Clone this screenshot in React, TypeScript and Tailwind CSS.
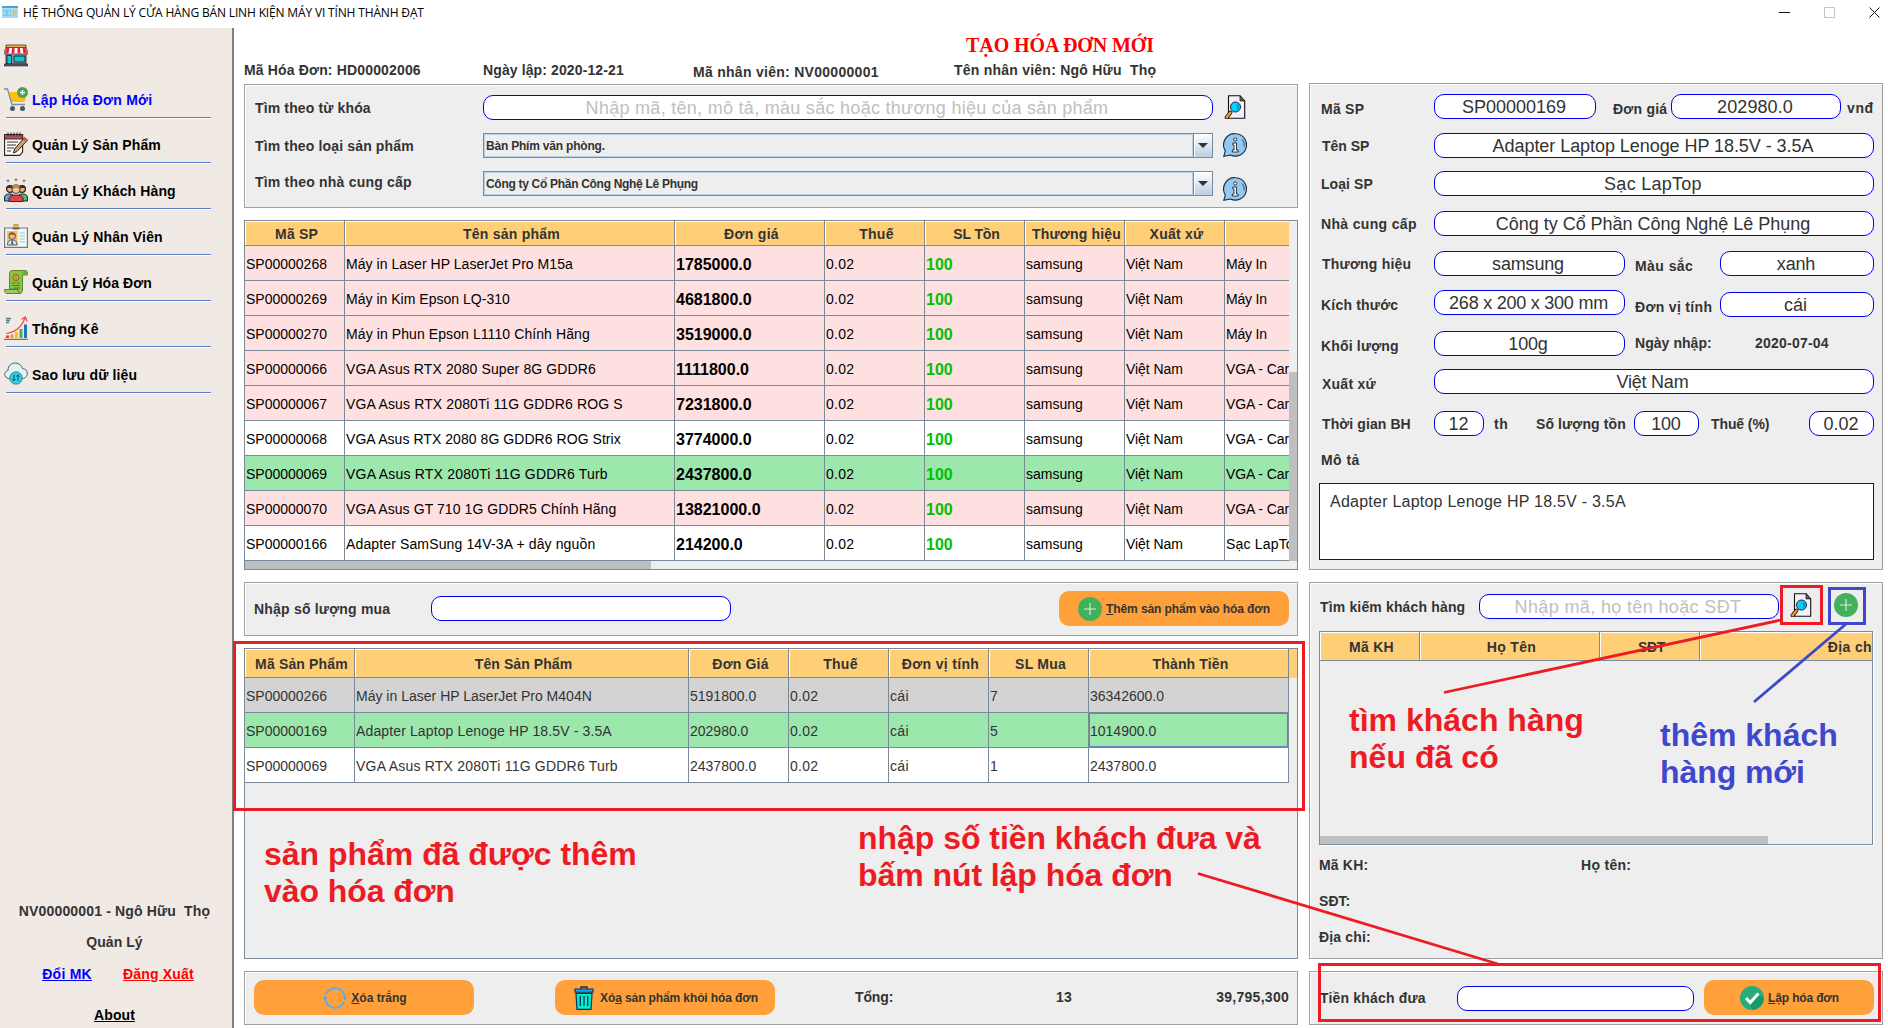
import { useLayoutEffect, useRef, type ReactNode } from "react";

/** Inline caption whose tracking is adjusted so that it spans `w` pixels. */
function Fit({ w, className = "", children }: { w?: number; className?: string; children: ReactNode }) {
  const ref = useRef<HTMLSpanElement>(null);
  useLayoutEffect(() => {
    const el = ref.current;
    if (!el || !w) return;
    el.style.letterSpacing = "0px";
    const natural = el.getBoundingClientRect().width;
    const count = (el.textContent ?? "").length;
    el.style.letterSpacing = `${(w + 0.8 - natural) / Math.max(count, 1)}px`;
  }, [w]);
  return (
    <span ref={ref} className={`inline-block whitespace-pre ${className}`}>
      {children}
    </span>
  );
}

function Label({ w, className = "", children }: { w?: number; className?: string; children: ReactNode }) {
  return (
    <div className={`shrink-0 text-[14px] leading-4 font-bold text-[#333] ${className}`}>
      <Fit w={w}>{children}</Fit>
    </div>
  );
}

function Field({ w, className = "pr-[2px]", muted = false, children }: { w?: number; className?: string; muted?: boolean; children?: ReactNode }) {
  return (
    <div
      className={`h-[25px] shrink-0 overflow-hidden rounded-[10px] border border-[#0000ee] bg-white text-center text-[18px] leading-[25px] ${
        muted ? "text-[#c0c0c0]" : "text-[#333]"
      } ${className}`}
    >
      {children !== undefined && <Fit w={w}>{children}</Fit>}
    </div>
  );
}

function Panel({ className = "", children }: { className?: string; children?: ReactNode }) {
  return (
    <section className={`border border-[#a0a0a0] bg-[#eee] shadow-[inset_1px_1px_0_#fff] ${className}`}>
      {children}
    </section>
  );
}

function Button({ className = "", icon, w, children }: { className?: string; icon: ReactNode; w: number; children: ReactNode }) {
  return (
    <button
      className={`flex h-[35px] shrink-0 items-center justify-center gap-1 rounded-[10px] bg-[#ffa03a] text-[12px] font-bold text-[#333] ${className}`}
    >
      {icon}
      <Fit w={w}>{children}</Fit>
    </button>
  );
}

/* ---------- icons ---------- */

const svg = "block h-6 w-6 shrink-0";

const StoreIcon = () => (
  <svg viewBox="0 0 24 24" className={svg}>
    <path d="M2 9h20v11H2z" fill="#8e9aa6" stroke="#222" strokeWidth="0.8" />
    <path d="M2 1h20v3H2z" fill="#f0b04a" stroke="#333" strokeWidth="0.8" />
    <path d="M2 3.500h20l2 5v1.500H0V8.500z" fill="#fff" stroke="#333" strokeWidth="0.8" />
    <path d="M2.500 4h3L4.500 9.500H.5zM8 4h2.500v5.500H7.500zM13.500 4H16l.5 5.500h-3zM18.500 4h3l2 5.500h-4z" fill="#e3262e" />
    <path d="M3 11.500h4.500V20H3zM10 12h11v6H10z" fill="#12c3d6" stroke="#222" strokeWidth="0.9" />
    <path d="M0 20h24v2H0z" fill="#555f6b" stroke="#222" strokeWidth="0.6" />
  </svg>
);
const CartIcon = () => (
  <svg viewBox="0 0 24 24" className={svg}>
    <path d="M5.500 5H18l4 6-1.500 4H7.500z" fill="#ffc107" />
    <path d="M0 2h3.500L8 17.500h13" fill="none" stroke="#78909c" strokeWidth="1.300" />
    <circle cx="8.500" cy="21.500" r="2.500" fill="#455a64" />
    <circle cx="18.500" cy="21.500" r="2.500" fill="#455a64" />
    <circle cx="18.500" cy="5.500" r="5.500" fill="#43a751" />
    <path d="M18.500 3v5M16 5.500h5" stroke="#fff" strokeWidth="1.300" />
  </svg>
);
const NotesIcon = () => (
  <svg viewBox="0 0 24 24" className={svg}>
    <path d="M.6 2.500h18V20l-3 3.400H.6z" fill="#fff" stroke="#222" strokeWidth="1.100" />
    <path d="M.6 2.500h18V7H.6z" fill="#c8505a" stroke="#222" strokeWidth="0.9" />
    <path d="M4 .5v4M7 .5v4M10 .5v4M13 .5v4M16 .5v4" stroke="#222" strokeWidth="1" />
    <path d="M3 10h11M3 13h9M3 16h7M3 19h4" stroke="#333" strokeWidth="1" />
    <path d="m20.500 5.500 3 2.500L13 19.500 9.500 21l1-4z" fill="#d9a066" stroke="#222" strokeWidth="1" />
    <path d="m20.500 5.500 3 2.500-1.700 1.800-3-2.600z" fill="#d95763" />
  </svg>
);
const PeopleIcon = () => (
  <svg viewBox="0 0 24 24" className={svg}>
    <path d="m4 1 .6 1.200L6 2.500l-1.200.8L4 4.500l-.8-1.200L2 2.500l1.400-.3zM12 0l.6 1.200 1.400.3-1.200.8L12 3.500l-.8-1.200L10 1.500l1.400-.3zM20 1l.6 1.200 1.400.3-1.200.8L20 4.500l-.8-1.200-1.200-.8 1.400-.3z" fill="#667" />
    <path d="M.5 23v-3c0-3 2-4 5-4s5 1 5 4v3z" fill="#5aa9e0" stroke="#222" />
    <path d="M13.500 23v-3c0-3 2-4 5-4s5 1 5 4v3z" fill="#55b878" stroke="#222" />
    <circle cx="6" cy="11" r="3.400" fill="#e8b088" stroke="#222" strokeWidth="1.300" />
    <circle cx="18" cy="11" r="3.400" fill="#e8b088" stroke="#222" strokeWidth="1.300" />
    <path d="M2.700 10c.5-3 6-3.500 6.600 0zM14.700 10c.5-3 6-3.500 6.600 0z" fill="#333" />
    <path d="M5 23.500v-2.500c0-3 3-4 7-4s7 1 7 4v2.500z" fill="#e8404a" stroke="#222" strokeWidth="0.9" />
    <circle cx="12" cy="11.500" r="4" fill="#f4c49c" stroke="#222" strokeWidth="0.8" />
    <path d="M7.800 11c0-6 8.400-6 8.400 0-2-1-3-2-4-2s-3 1-4.400 2z" fill="#e8a23c" stroke="#222" strokeWidth="0.5" />
  </svg>
);
const StaffIcon = () => (
  <svg viewBox="0 0 24 24" className={svg}>
    <path d="M.6 4h22.800v19.400H.6z" fill="#f4f6f7" stroke="#6b7b88" strokeWidth="1.200" />
    <path d="M10 0h4v5h-4z" fill="#e9b23d" stroke="#8b6a20" strokeWidth="0.5" />
    <path d="M8.500 4.500h7" stroke="#555" strokeWidth="1.500" />
    <path d="M3 7h10.500v14H3z" fill="#f3c14b" />
    <path d="M3.500 21c0-4 2-5 4.700-5s4.800 1 4.800 5z" fill="#d8e4ec" stroke="#445" strokeWidth="0.9" />
    <circle cx="8.200" cy="12" r="3.300" fill="#f0b78d" stroke="#445" strokeWidth="0.8" />
    <path d="M5 11.500c0-4 6.400-4 6.400 0-2-1.300-4-1.300-6.400 0z" fill="#8a5530" />
    <path d="M7.600 16.500h1.200l.4 4h-2z" fill="#46566a" />
    <path d="M15.500 9H21M15.500 12H21M15.500 15H21M15.500 18H21" stroke="#9fcfb5" strokeWidth="1" />
  </svg>
);
const InvoiceIcon = () => (
  <svg viewBox="0 0 24 24" className={svg}>
    <path d="M5.500 3.500c0-2 1-3 3-3H21c1.500 0 2.400 1 2.400 2.500V5H18.500v14H5.500z" fill="#8bc34a" stroke="#4b7d24" strokeWidth="0.9" />
    <path d="M18.500 5V2.500C18.500 1 19.500.6 21 .6s2.400 1 2.400 2.400V5z" fill="#6fa834" />
    <path d="M.6 19.500h13.500c0 3 1 4 2.400 4H3C1.500 23.500.6 22 .6 19.500z" fill="#9ccc65" stroke="#4b7d24" strokeWidth="0.9" />
    <path d="M14 20c0 4.500 4.500 4.500 4.500 0V16" fill="#8bc34a" stroke="#4b7d24" strokeWidth="0.9" />
    <circle cx="12" cy="7.500" r="3" fill="#f5b82e" stroke="#5e4a12" strokeWidth="0.8" />
    <path d="M12 5.800v3.400" stroke="#5e4a12" strokeWidth="0.9" />
    <path d="M8 13h3.500M12.500 13H16M8 15.500h8M10 18h6" stroke="#4b7d24" strokeWidth="1" />
  </svg>
);
const ChartIcon = () => (
  <svg viewBox="0 0 24 24" className={svg}>
    <path d="M2 2.500h5M2 4.500h4M2 6.500h3" stroke="#607d8b" strokeWidth="1.500" />
    <path d="M2 19.500h3V22H2z" fill="#e53935" />
    <path d="M6.500 18.500h3V22h-3z" fill="#ff9800" />
    <path d="M11 16h3v6h-3z" fill="#ffc107" />
    <path d="M15.500 13h3v9h-3z" fill="#4caf50" />
    <path d="M20 8.500h3V22h-3z" fill="#1976b8" />
    <path d="M2 17.500c9-1 15-5 19-15.500M17.500 3.500 21.300.8l1.700 4.400" fill="none" stroke="#f0494f" strokeWidth="1.200" />
    <path d="M0 23.300h24" stroke="#455a64" strokeWidth="1" />
  </svg>
);
const CloudIcon = () => (
  <svg viewBox="0 0 24 24" className={svg}>
    <path d="M6 16.500H4.500C-.5 15.500-.3 9.500 4 8.500 4 3 8 1 11.500 1S18 4 18.500 6.500c6 .5 6.500 8.500 1 10H18" fill="#e1f5f8" stroke="#4b5f69" strokeWidth="1" />
    <circle cx="12" cy="16" r="6.200" fill="#2fd3e6" stroke="#3a7580" strokeWidth="0.9" />
    <path d="M10 12.500v6M8.500 17 10 18.700 11.500 17M14 19v-6M12.500 14.500 14 12.800l1.500 1.700" fill="none" stroke="#174a55" strokeWidth="1" />
  </svg>
);
const SearchDocIcon = ({ className = "" }: { className?: string }) => (
  <svg viewBox="0 0 24 24" className={`${svg} ${className}`}>
    <path d="M4.500.7H16l4.700 5.200v17.400H4.500z" fill="#f1f1fa" stroke="#111" strokeWidth="1.100" />
    <path d="M16 .7v5.200h4.700z" fill="#667" stroke="#111" strokeWidth="0.8" />
    <circle cx="11.500" cy="12" r="5" fill="#00d2ff" stroke="#223" strokeWidth="1" />
    <path d="M13 9.500c1.500 1.500 1.500 3.500 0 5" stroke="#036" strokeWidth="0.8" fill="none" />
    <path d="m6.500 17.500-4 5" stroke="#111" strokeWidth="3.800" strokeLinecap="round" />
    <path d="m6.500 17.500-4 5" stroke="#f0a030" strokeWidth="2.200" strokeLinecap="round" />
  </svg>
);
const InfoIcon = ({ className = "" }: { className?: string }) => (
  <svg viewBox="0 0 24 24" className={`${svg} ${className}`}>
    <path d="M12.500.7a11.200 11.200 0 1 1-5 21.300L.8 23.300l1.500-5.500A11.200 11.200 0 0 1 12.500.7z" fill="#90caf5" stroke="#1c2a38" strokeWidth="1.100" />
    <circle cx="12.200" cy="6.500" r="1.600" fill="#fff" stroke="#222" strokeWidth="0.9" />
    <path d="M9.800 10h3.700v7h1.700v2H9.300v-2H11v-5H9.800z" fill="#fff" stroke="#222" strokeWidth="0.9" />
    <path d="M19 6.500c2 2 2.500 4.500 2 7" fill="none" stroke="#1c2a38" strokeWidth="0.8" />
  </svg>
);
const PlusIcon = ({ className = "" }: { className?: string }) => (
  <svg viewBox="0 0 24 24" className={`${svg} ${className}`}>
    <circle cx="12" cy="12" r="12" fill="#43b05c" />
    <path d="M12 6v12M6 12h12" stroke="#d9f0dd" strokeWidth="1.100" />
  </svg>
);
const RefreshIcon = () => (
  <svg viewBox="0 0 24 24" className={svg}>
    <path d="M3 7.800A10 10 0 0 1 22 12M21 16.200A10 10 0 0 1 2 12" fill="none" stroke="#5aabf0" strokeWidth="1.900" />
    <path d="M19.800 11h4.200L21.900 14.500zM0 13h4.200L2.100 9.500z" fill="#42a5f5" />
  </svg>
);
const TrashIcon = () => (
  <svg viewBox="0 0 24 24" className={svg}>
    <path d="M9 3V1h6v2" fill="none" stroke="#0b3554" strokeWidth="1.300" />
    <path d="M3 3h18v3.300H3z" fill="#12a5f4" stroke="#0b3554" strokeWidth="1.100" />
    <path d="M4 7.500h16L19 23.300H5z" fill="#00efd1" stroke="#0b3554" strokeWidth="1.200" />
    <path d="M8.300 10v10M12 10v10M15.700 10v10" stroke="#0b3554" strokeWidth="1.300" />
  </svg>
);
const CheckIcon = () => (
  <svg viewBox="0 0 24 24" className={svg}>
    <circle cx="12" cy="12" r="12" fill="#27ae78" />
    <path d="m18.500 7 5.400 5.500A12 12 0 0 1 13 24l-3.500-7z" fill="#149c68" />
    <path d="m6 12 4.300 4.500L18.500 7.500" fill="none" stroke="#fff" strokeWidth="3" />
  </svg>
);
const AppIcon = () => (
  <svg viewBox="0 0 16 12" className="mb-[4px] block h-3 w-4 shrink-0">
    <path d="M0 0h16v12H0z" fill="#a5dcf5" />
    <path d="M0 0h16v2H0z" fill="#4ba3d4" />
    <path d="M1 4h8v6H1z" fill="#7cc7ea" />
    <path d="M3.500 5.500 2 7l1.500 1.500M6.500 5.500 8 7 6.500 8.500" fill="none" stroke="#fff" strokeWidth="0.8" />
    <path d="M10.500 5H15M10.500 7H15M10.500 9H14" stroke="#f5a742" strokeWidth="0.9" />
  </svg>
);

/* ---------- sidebar ---------- */

const menu = [
  { text: "Lập Hóa Đơn Mới", w: 119.5, icon: <CartIcon />, color: "text-[#0000ff]", height: "h-[47px]" },
  { text: "Quản Lý Sản Phẩm", w: 128, icon: <NotesIcon />, color: "text-black", height: "h-[45px]" },
  { text: "Quản Lý Khách Hàng", w: 143, icon: <PeopleIcon />, color: "text-black", height: "h-[46px]" },
  { text: "Quản Lý Nhân Viên", w: 130, icon: <StaffIcon />, color: "text-black", height: "h-[46px]" },
  { text: "Quản Lý Hóa Đơn", w: 119, icon: <InvoiceIcon />, color: "text-black", height: "h-[46px]" },
  { text: "Thống Kê", w: 66, icon: <ChartIcon />, color: "text-black", height: "h-[46px]" },
  { text: "Sao lưu dữ liệu", w: 104.5, icon: <CloudIcon />, color: "text-black", height: "h-[46px]" },
];

function Sidebar() {
  return (
    <aside className="flex w-[234px] shrink-0 flex-col border-r-2 border-[#808080] bg-[#f1eae4]">
      <div className="h-[44px] pt-4 pl-1">
        <StoreIcon />
      </div>
      <nav>
        {menu.map((m) => (
          <div key={m.text} className={`flex flex-col justify-end pl-1 ${m.height}`}>
            <div className="flex items-center gap-1">
              {m.icon}
              <div className={`pt-[2px] text-[14px] leading-4 font-bold ${m.color}`}>
                <Fit w={m.w}>{m.text}</Fit>
              </div>
            </div>
            <div className="mt-[6px] ml-[2px] h-[2px] w-[205px] border-t border-[#5f80c0] bg-white" />
          </div>
        ))}
      </nav>
      <div className="mt-auto flex flex-col items-center pr-[3px] pb-[5px]">
        <Label w={190.500}>NV00000001 - Ngô Hữu  Thọ</Label>
        <Label w={55.500} className="mt-[15px]">Quản Lý</Label>
        <div className="mt-4 flex gap-[31px] pl-[7px] text-[14px] leading-4 font-bold">
          <a className="text-[#0000ff]"><Fit w={49} className="underline">Đổi MK</Fit></a>
          <a className="text-[#ff0000]"><Fit w={70} className="underline">Đăng Xuất</Fit></a>
        </div>
        <a className="mt-[25px] text-[14px] leading-4 font-bold text-black"><Fit w={40} className="underline">About</Fit></a>
      </div>
    </aside>
  );
}

/* ---------- tables ---------- */

type Col = { text: string; w?: number; cls: string };

function HeaderRow({ cols, tall = false }: { cols: Col[]; tall?: boolean }) {
  return (
    <div className="flex">
      {cols.map((c, i) => (
        <div
          key={i}
          className={`shrink-0 overflow-hidden border-r border-b border-[#7a8a99] bg-[#ffcf78] pl-1 text-center text-[14px] font-bold text-[#333] shadow-[inset_1px_1px_0_#fff] ${
            tall ? "h-[29px] leading-[30px]" : "h-[25px] leading-[26px]"
          } ${c.cls}`}
        >
          <Fit w={c.w}>{c.text}</Fit>
        </div>
      ))}
    </div>
  );
}

const productCols: Col[] = [
  { text: "Mã SP", w: 42, cls: "w-[100px]" },
  { text: "Tên sản phẩm", w: 96, cls: "w-[330px]" },
  { text: "Đơn giá", w: 54, cls: "w-[150px]" },
  { text: "Thuế", w: 33.5, cls: "w-[100px]" },
  { text: "SL Tồn", w: 45.5, cls: "w-[100px]" },
  { text: "Thương hiệu", w: 88, cls: "w-[100px]" },
  { text: "Xuất xứ", w: 53, cls: "w-[100px]" },
  { text: "", cls: "w-[64px] border-r-0" },
];

const products = [
  { id: "268", name: "Máy in Laser HP LaserJet Pro M15a", w: 226, price: "1785000.0", kind: "Máy In", kw: 40, tone: "bg-[#ffe0e0]" },
  { id: "269", name: "Máy in Kim Epson LQ-310", w: 163, price: "4681800.0", kind: "Máy In", kw: 40, tone: "bg-[#ffe0e0]" },
  { id: "270", name: "Máy in Phun Epson L1110 Chính Hãng", w: 243, price: "3519000.0", kind: "Máy In", kw: 40, tone: "bg-[#ffe0e0]" },
  { id: "066", name: "VGA Asus RTX 2080 Super 8G GDDR6", w: 249, price: "1111800.0", kind: "VGA - Card", kw: 70, tone: "bg-[#ffe0e0]" },
  { id: "067", name: "VGA Asus RTX 2080Ti 11G GDDR6 ROG S", w: 276, price: "7231800.0", kind: "VGA - Card", kw: 70, tone: "bg-[#ffe0e0]" },
  { id: "068", name: "VGA Asus RTX 2080 8G GDDR6 ROG Strix", w: 274, price: "3774000.0", kind: "VGA - Card", kw: 70, tone: "bg-white" },
  { id: "069", name: "VGA Asus RTX 2080Ti 11G GDDR6 Turb", w: 261, price: "2437800.0", kind: "VGA - Card", kw: 70, tone: "bg-[#9be7ac]" },
  { id: "070", name: "VGA Asus GT 710 1G GDDR5 Chính Hãng", w: 269.5, price: "13821000.0", kind: "VGA - Card", kw: 70, tone: "bg-[#ffe0e0]" },
  { id: "166", name: "Adapter SamSung 14V-3A + dây nguồn", w: 248.5, price: "214200.0", kind: "Sạc LapTop", kw: 75, tone: "bg-white" },
];

const cell = "h-[35px] shrink-0 overflow-hidden whitespace-nowrap border-r border-b border-[#7a8a99] pl-px";
const plain = "leading-[36px]";
const strong = "text-[16px] leading-[37px] font-bold";

function ProductTable() {
  return (
    <div className="mt-3 flex h-[350px] flex-col border border-[#7a8a99] bg-[#eee]">
      <div className="flex h-[340px]">
        <div className="w-[1044px] overflow-hidden">
          <HeaderRow cols={productCols} />
          {products.map((p) => (
            <div key={p.id} className={`flex text-[14px] text-black ${p.tone}`}>
              <div className={`${cell} ${plain} w-[100px]`}>SP00000{p.id}</div>
              <div className={`${cell} ${plain} w-[330px]`}><Fit w={p.w}>{p.name}</Fit></div>
              <div className={`${cell} ${strong} w-[150px]`}>{p.price}</div>
              <div className={`${cell} ${plain} w-[100px]`}><Fit w={27.5}>0.02</Fit></div>
              <div className={`${cell} ${strong} w-[100px] text-[#00c000]`}>100</div>
              <div className={`${cell} ${plain} w-[100px]`}><Fit w={56}>samsung</Fit></div>
              <div className={`${cell} ${plain} w-[100px]`}><Fit w={56}>Việt Nam</Fit></div>
              <div className={`${cell} ${plain} w-[64px] border-r-0`}><Fit w={p.kw}>{p.kind}</Fit></div>
            </div>
          ))}
        </div>
        <div className="flex w-2 flex-col justify-end">
          <div className="h-[189px] bg-[#bfbfbf]" />
        </div>
      </div>
      <div className="h-2 w-[406px] bg-[#bfbfbf]" />
    </div>
  );
}

const cartCols: Col[] = [
  { text: "Mã Sản Phẩm", w: 92, cls: "w-[110px]" },
  { text: "Tên Sản Phẩm", w: 96.5, cls: "w-[334px]" },
  { text: "Đơn Giá", w: 55.5, cls: "w-[100px]" },
  { text: "Thuế", w: 33.5, cls: "w-[100px]" },
  { text: "Đơn vị tính", w: 76.5, cls: "w-[100px]" },
  { text: "SL Mua", w: 50, cls: "w-[100px]" },
  { text: "Thành Tiền", w: 75, cls: "w-[200px]" },
];

const cart = [
  { id: "SP00000266", name: "Máy in Laser HP LaserJet Pro M404N", w: 235, price: "5191800.0", qty: "7", total: "36342600.0", tone: "bg-[#d3d3d3]" },
  { id: "SP00000169", name: "Adapter Laptop Lenoge HP 18.5V - 3.5A", w: 255, price: "202980.0", qty: "5", total: "1014900.0", tone: "bg-[#9be7ac]", selected: true },
  { id: "SP00000069", name: "VGA Asus RTX 2080Ti 11G GDDR6 Turb", w: 261, price: "2437800.0", qty: "1", total: "2437800.0", tone: "bg-white" },
];

function CartTable() {
  return (
    <div className="mt-3 h-[311px] border border-[#7a8a99] bg-[#eee]">
      <div className="flex">
        <HeaderRow cols={cartCols} tall />
        <div className="h-[29px] flex-1 bg-[#ffcf78]" />
      </div>
      {cart.map((c) => (
        <div key={c.id} className={`flex w-[1044px] text-[14px] text-[#333] ${c.tone}`}>
          <div className={`${cell} ${plain} w-[110px]`}>{c.id}</div>
          <div className={`${cell} ${plain} w-[334px]`}><Fit w={c.w}>{c.name}</Fit></div>
          <div className={`${cell} ${plain} w-[100px]`}>{c.price}</div>
          <div className={`${cell} ${plain} w-[100px]`}><Fit w={27.5}>0.02</Fit></div>
          <div className={`${cell} ${plain} w-[100px]`}><Fit w={18}>cái</Fit></div>
          <div className={`${cell} ${plain} w-[100px]`}>{c.qty}</div>
          <div className={`${cell} ${plain} w-[200px] ${c.selected ? "shadow-[inset_0_0_0_1px_#6382bf]" : ""}`}>{c.total}</div>
        </div>
      ))}
    </div>
  );
}

/* ---------- left column ---------- */

function Combo({ w, children }: { w: number; children: string }) {
  return (
    <div className="flex h-[25px] w-[730px] border border-[#7a8a99] bg-[#eee]">
      <div className="flex-1 pl-[2px] text-[12px] leading-[24px] font-bold text-[#333] shadow-[inset_1px_1px_0_#b8cfe5,inset_-1px_-1px_0_#b8cfe5]">
        <Fit w={w}>{children}</Fit>
      </div>
      <div className="flex w-[19px] items-center justify-center border-l border-[#7a8a99] bg-linear-to-b from-white to-[#b8cfe5] shadow-[inset_1px_1px_0_#fff]">
        <svg viewBox="0 0 10 5" className="h-[5px] w-[10px]"><path d="M0 0h10L5 5z" fill="#333" /></svg>
      </div>
    </div>
  );
}

function LeftColumn() {
  return (
    <div className="w-[1054px] pt-px">
      <Panel className="h-[124px] pt-[10px] pl-[9px]">
        <div className="flex h-[38px] items-start">
          <Label w={115} className="mt-[5px] w-[229px] pl-[1px]">Tìm theo từ khóa</Label>
          <Field w={522} muted className="w-[730px] pr-[2px]">Nhập mã, tên, mô tả, màu sắc hoặc thương hiệu của sản phẩm</Field>
          <SearchDocIcon className="ml-[11px]" />
        </div>
        <div className="flex h-[38px] items-start">
          <Label w={158} className="mt-[5px] w-[229px] pl-[1px]">Tìm theo loại sản phẩm</Label>
          <Combo w={118}>Bàn Phím văn phòng.</Combo>
          <InfoIcon className="ml-[10px]" />
        </div>
        <div className="flex items-start">
          <Label w={156} className="mt-[3px] w-[229px] pl-[1px]">Tìm theo nhà cung cấp</Label>
          <Combo w={211}>Công ty Cổ Phần Công Nghệ Lê Phụng</Combo>
          <InfoIcon className="mt-[6px] ml-[10px]" />
        </div>
      </Panel>
      <ProductTable />
      <Panel className="mt-3 flex h-[54px] items-start pt-2 pl-2">
        <Label w={135.500} className="mt-[10px] w-[178px] pl-px">Nhập số lượng mua</Label>
        <Field className="mt-[5px] w-[300px]" />
        <Button className="ml-[328px] w-[230px]" w={163} icon={<PlusIcon />}>
          <u>T</u>hêm sản phẩm vào hóa đơn
        </Button>
      </Panel>
      <CartTable />
      <Panel className="mt-3 flex h-[54px] items-start pt-2 pl-[9px]">
        <Button className="w-[220px] pl-[2px]" w={54.5} icon={<RefreshIcon />}>
          <u>X</u>óa trắng
        </Button>
        <Button className="ml-[81px] w-[220px]" w={157} icon={<TrashIcon />}>
          Xó<u>a</u> sản phẩm khỏi hóa đơn
        </Button>
        <Label w={37.5} className="mt-[9px] ml-[80px] w-[201px]">Tổng:</Label>
        <Label w={15} className="mt-[9px] w-[100px]">13</Label>
        <Label w={72} className="mt-[9px] w-[133px] text-right">39,795,300</Label>
      </Panel>
    </div>
  );
}

/* ---------- right column ---------- */

function ProductDetail() {
  const first = "w-[124px] pl-[12px]";
  return (
    <Panel className="h-[487px] pt-[10px]">
      <div className="flex h-[39px] items-start">
        <Label w={42.5} className="mt-[7px] w-[124px] pl-[11px]">Mã SP</Label>
        <Field w={103} className="w-[162px] pr-[2px]">SP00000169</Field>
        <Label w={53.5} className="mt-[7px] ml-[17px] w-[58px]">Đơn giá</Label>
        <Field w={75} className="w-[170px] pr-[2px]">202980.0</Field>
        <Label w={26} className="mt-[6px] ml-[6px]">vnđ</Label>
      </div>
      <div className="flex h-[38px] items-start">
        <Label w={46.5} className={`mt-[5px] ${first}`}>Tên SP</Label>
        <Field w={320} className="w-[440px] pr-[2px]">Adapter Laptop Lenoge HP 18.5V - 3.5A</Field>
      </div>
      <div className="flex h-10 items-start">
        <Label w={51} className="mt-[5px] w-[124px] pl-[11px]">Loại SP</Label>
        <Field w={97} className="w-[440px] pr-[2px]">Sạc LapTop</Field>
      </div>
      <div className="flex h-10 items-start">
        <Label w={95} className="mt-[5px] w-[124px] pl-[11px]">Nhà cung cấp</Label>
        <Field w={313.5} className="w-[440px] pr-[2px]">Công ty Cổ Phần Công Nghệ Lê Phụng</Field>
      </div>
      <div className="flex h-[39px] items-start">
        <Label w={88.5} className={`mt-[5px] ${first}`}>Thương hiệu</Label>
        <Field w={71} className="w-[191px] pr-[3px]">samsung</Field>
        <Label w={57.5} className="mt-[7px] ml-[10px] w-[85px]">Màu sắc</Label>
        <Field w={37.5} className="w-[154px] pr-[2px]">xanh</Field>
      </div>
      <div className="flex h-[41px] items-start">
        <Label w={76.5} className="mt-[7px] w-[124px] pl-[11px]">Kích thước</Label>
        <Field w={158} className="w-[191px] pr-[2px]">268 x 200 x 300 mm</Field>
        <Label w={76.5} className="mt-[9px] ml-[10px] w-[85px]">Đơn vị tính</Label>
        <Field w={22} className="mt-[2px] w-[154px] pr-[3px]">cái</Field>
      </div>
      <div className="flex h-[38px] items-start">
        <Label w={77} className="mt-[7px] w-[124px] pl-[11px]">Khối lượng</Label>
        <Field w={38.5} className="w-[191px] pr-[3px]">100g</Field>
        <Label w={76} className="mt-1 ml-[10px] w-[120px]">Ngày nhập:</Label>
        <Label w={73} className="mt-1">2020-07-04</Label>
      </div>
      <div className="flex h-[42px] items-start">
        <Label w={53} className={`mt-[7px] ${first}`}>Xuất xứ</Label>
        <Field w={71} className="w-[440px] pr-[3px]">Việt Nam</Field>
      </div>
      <div className="flex h-[41px] items-start">
        <Label w={88} className={`mt-[5px] ${first}`}>Thời gian BH</Label>
        <Field w={19} className="w-[50px] pr-px">12</Field>
        <Label w={13.5} className="mt-[5px] ml-[10px] w-[42px]">th</Label>
        <Label w={89} className="mt-[5px] w-[98px]">Số lượng tồn</Label>
        <Field w={28.5} className="w-[65px] pr-px">100</Field>
        <Label w={57.5} className="mt-[5px] ml-[12px] w-[98px]">Thuế (%)</Label>
        <Field w={34} className="w-[65px] pr-px">0.02</Field>
      </div>
      <Label w={38} className="pl-[11px]">Mô tả</Label>
      <div className="mt-[15px] ml-[9px] h-[77px] w-[555px] border border-[#0000ee] bg-white pt-[9px] pl-[10px] text-[16px] leading-[18px] text-[#333]">
        <Fit w={295}>Adapter Laptop Lenoge HP 18.5V - 3.5A</Fit>
      </div>
    </Panel>
  );
}

const customerCols: Col[] = [
  { text: "Mã KH", w: 44, cls: "w-[100px]" },
  { text: "Họ Tên", w: 48.5, cls: "w-[180px]" },
  { text: "SĐT", w: 26, cls: "w-[100px]" },
  { text: "Địa chỉ", w: 47.5, cls: "w-[300px] border-r-0" },
];

function CustomerPanel() {
  return (
    <Panel className="mt-3 h-[377px] pt-[10px] pl-[9px]">
      <div className="flex h-[38px] items-start">
        <Label w={144.5} className="mt-[6px] w-[160px] pl-[1px]">Tìm kiếm khách hàng</Label>
        <Field w={226} muted className="mt-px w-[300px] pr-[2px]">Nhập mã, họ tên hoặc SĐT</Field>
        <SearchDocIcon className="ml-[11px]" />
        <PlusIcon className="ml-[20px]" />
      </div>
      <div className="flex h-[214px] w-[554px] flex-col justify-between overflow-hidden border border-[#7a8a99] shadow-[1px_1px_0_#fff]">
        <HeaderRow cols={customerCols} tall />
        <div className="h-2 w-[448px] bg-[#bfbfbf]" />
      </div>
      <div className="mt-[12px] flex">
        <Label w={48.5} className="w-[262px]">Mã KH:</Label>
        <Label w={49.5}>Họ tên:</Label>
      </div>
      <Label w={30.5} className="mt-5">SĐT:</Label>
      <Label w={51} className="mt-5">Địa chỉ:</Label>
    </Panel>
  );
}

function PaymentPanel() {
  return (
    <Panel className="mt-3 flex h-[54px] items-start pt-2 pl-[10px]">
      <Label w={105} className="mt-[10px] w-[137px]">Tiền khách đưa</Label>
      <Field className="mt-[6px] w-[237px]" />
      <Button className="ml-[10px] w-[170px] pl-px" w={70} icon={<CheckIcon />}>
        <u>L</u>ập hóa đơn
      </Button>
    </Panel>
  );
}

/* ---------- annotations lying over the window ---------- */

function Annotations() {
  const note = "absolute text-[32px] leading-[37px] font-bold";
  return (
    <div className="pointer-events-none absolute inset-0">
      <svg viewBox="0 0 1888 1028" className="absolute inset-0 h-full w-full" fill="none" strokeWidth="2.800">
        <path d="M1198 873.500 1498 964M1444 692.500 1781 620" stroke="#ed1c24" />
        <path d="M1754 702 1846 624" stroke="#3f48cc" />
      </svg>
      <div className="absolute top-[641px] left-[233px] h-[170px] w-[1072px] border-[3px] border-[#ed1c24]" />
      <div className="absolute top-[963px] left-[1318px] h-[59px] w-[563px] border-[3px] border-[#ed1c24]" />
      <div className="absolute top-[585px] left-[1780px] h-10 w-[43px] border-[3px] border-[#ed1c24]" />
      <div className="absolute top-[587px] left-[1828px] h-[38px] w-[38px] border-[3px] border-[#3f48cc]" />
      <div className={`${note} top-[836px] left-[264px] text-[#ed1c24]`}>
        <Fit w={372}>sản phẩm đã được thêm</Fit><br /><Fit w={190}>vào hóa đơn</Fit>
      </div>
      <div className={`${note} top-[820px] left-[858px] text-[#ed1c24]`}>
        <Fit w={402}>nhập số tiền khách đưa và</Fit><br /><Fit w={314}>bấm nút lập hóa đơn</Fit>
      </div>
      <div className={`${note} top-[702px] left-[1349px] text-[#ed1c24]`}>
        <Fit w={234}>tìm khách hàng</Fit><br /><Fit w={149}>nếu đã có</Fit>
      </div>
      <div className={`${note} top-[717px] left-[1660px] text-[#3f48cc]`}>
        <Fit w={177}>thêm khách</Fit><br /><Fit w={144}>hàng mới</Fit>
      </div>
    </div>
  );
}

export default function App() {
  return (
    <div className="relative flex h-[1028px] w-[1888px] flex-col overflow-hidden bg-white font-['Liberation_Sans',Arial,sans-serif]">
      <header className="flex h-7 shrink-0 items-center pl-[2px]">
        <AppIcon />
        <div className="ml-[5px] pb-[2px] font-['Open_Sans','Noto_Sans',sans-serif] text-[12px] leading-[18px] text-black">
          <Fit w={400}>HỆ THỐNG QUẢN LÝ CỬA HÀNG BÁN LINH KIỆN MÁY VI TÍNH THÀNH ĐẠT</Fit>
        </div>
        <div className="mr-2 mb-[3px] ml-auto flex items-center gap-[34px]">
          <svg viewBox="0 0 11 11" className="h-[11px] w-[11px]"><path d="M0 5.500h11" stroke="#111" /></svg>
          <svg viewBox="0 0 11 11" className="h-[11px] w-[11px]"><path d="M.5.5h10v10H.5z" fill="none" stroke="#c4c4c4" /></svg>
          <svg viewBox="0 0 11 11" className="h-[11px] w-[11px]"><path d="m.5.5 10 10M10.500.5l-10 10" stroke="#111" /></svg>
        </div>
      </header>
      <div className="flex min-h-0 flex-1">
        <Sidebar />
        <main className="flex-1">
          <div className="h-[55px] pt-[6px]">
            <h1 className="pr-[2px] text-center font-['Liberation_Serif',serif] text-[20px] leading-[22px] font-bold text-[#ff0000]">
              <Fit w={187}>TẠO HÓA ĐƠN MỚI</Fit>
            </h1>
            <div className="mt-[6px] flex pl-[10px]">
              <Label w={176} className="w-[239px]">Mã Hóa Đơn: HD00002006</Label>
              <Label w={140} className="w-[210px]">Ngày lập: 2020-12-21</Label>
              <Label w={185} className="w-[261px] pt-[2px]">Mã nhân viên: NV00000001</Label>
              <Label w={201.500}>Tên nhân viên: Ngô Hữu  Thọ</Label>
            </div>
          </div>
          <div className="flex items-start gap-[11px] pl-[10px]">
            <LeftColumn />
            <div className="w-[574px]">
              <ProductDetail />
              <CustomerPanel />
              <PaymentPanel />
            </div>
          </div>
        </main>
      </div>
      <Annotations />
    </div>
  );
}
